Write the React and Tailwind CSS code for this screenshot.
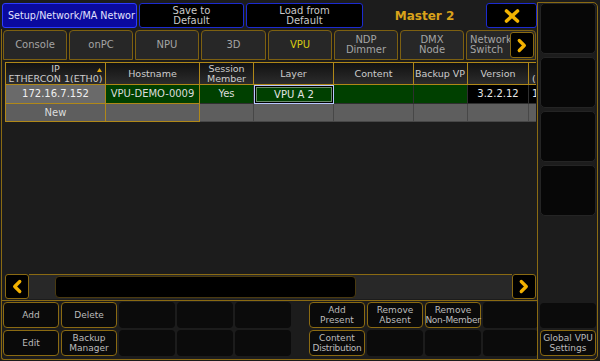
const GOLD = "border-[#8a6a12]";

function ChevronLeft() {
  return (
    <svg width="24" height="25" viewBox="0 0 24 25">
      <polyline points="15,7 9.5,12.5 15,18" fill="none" stroke="#f2b100" strokeWidth="3.6" strokeLinecap="round" strokeLinejoin="round" />
    </svg>
  );
}
function ChevronRight() {
  return (
    <svg width="24" height="25" viewBox="0 0 24 25">
      <polyline points="9,7 14.5,12.5 9,18" fill="none" stroke="#f2b100" strokeWidth="3.6" strokeLinecap="round" strokeLinejoin="round" />
    </svg>
  );
}

function Tab({ w, children, active }) {
  return (
    <div
      className={`h-[30px] ${w} shrink-0 rounded-t-[4px] border border-[#7d6011] bg-[#272727] flex flex-col items-center justify-center leading-[10px] ${
        active ? "text-[#d8cc10] bg-[#222222]" : "text-[#a4a4a4]"
      }`}
    >
      {children}
    </div>
  );
}

function HBtn({ children, w = "w-[56px]", empty }) {
  if (empty)
    return <div className={`${w} shrink-0 h-full rounded-[4px] bg-[#0b0b0b]`} />;
  return (
    <div className={`${w} shrink-0 h-full rounded-[4px] bg-[#0a0a0a] border ${GOLD} flex flex-col items-center justify-center text-[#bcbcbc] text-[9px] leading-[10px] whitespace-nowrap`}>
      {children}
    </div>
  );
}

export default function App() {
  const hdr =
    "h-[23px] bg-linear-to-b from-[#121212] to-[#2c2c2c] border-r border-b border-t border-[#b08818] flex flex-col items-center justify-center text-[#cdcdcd] text-[9.5px] leading-[10px] whitespace-nowrap overflow-hidden";
  return (
    <div className="w-[600px] h-[361px] bg-[#1c1c1c] flex overflow-hidden font-['DejaVu_Sans',sans-serif] text-[10px] leading-[10px]">
      {/* LEFT */}
      <div className="w-[537px] shrink-0 flex flex-col">
        {/* title bar */}
        <div className="h-[29px] shrink-0 flex pt-[3px] pb-[1px] pl-[2px] gap-[2px]">
          <div className="w-[135px] shrink-0 bg-[#0a0a9e] border border-[#2c3cff] rounded-[3px] flex items-center pl-[5px] text-[#e2e2ff] text-[9.6px] whitespace-nowrap overflow-hidden">
            Setup/Network/MA Networ
          </div>
          <div className="w-[105px] shrink-0 bg-black border border-[#1c2bd0] rounded-[3px] flex flex-col items-center justify-center text-[#c8c8c8]">
            <span>Save to</span>
            <span>Default</span>
          </div>
          <div className="w-[117px] shrink-0 bg-black border border-[#1c2bd0] rounded-[3px] flex flex-col items-center justify-center text-[#c8c8c8]">
            <span>Load from</span>
            <span>Default</span>
          </div>
          <div className="w-[119px] shrink-0 flex items-center justify-center text-[#d9a21a] font-bold text-[12px]">
            Master 2
          </div>
          <div className="w-[51px] shrink-0 bg-black border border-[#1c2bd0] rounded-[3px] flex items-center justify-center">
            <svg width="16" height="14" viewBox="0 0 16 14">
              <path d="M2.5 2 L13.5 12 M13.5 2 L2.5 12" stroke="#f2b300" strokeWidth="3.6" strokeLinecap="round" />
            </svg>
          </div>
        </div>

        {/* main panel */}
        <div className={`h-[272px] shrink-0 ml-[1px] border-l border-b ${GOLD} flex flex-col pt-[1px]`}>
          {/* tabs */}
          <div className="h-[30px] shrink-0 flex gap-[2px] pl-[1px]">
            <Tab w="w-[64px]">Console</Tab>
            <Tab w="w-[64px]">onPC</Tab>
            <Tab w="w-[64px]">NPU</Tab>
            <Tab w="w-[65px]">3D</Tab>
            <Tab w="w-[64px]" active>VPU</Tab>
            <Tab w="w-[64px]">
              <span>NDP</span>
              <span>Dimmer</span>
            </Tab>
            <Tab w="w-[64px]">
              <span>DMX</span>
              <span>Node</span>
            </Tab>
            <div className="relative h-[30px] w-[70px] shrink-0 rounded-t-[4px] border border-[#7d6011] bg-[#272727] flex flex-col justify-center pl-[3px] text-[#a4a4a4] leading-[10px] overflow-hidden">
              <span>Network</span>
              <span>Switch</span>
              <div className="absolute right-[1px] top-[1px] w-[24px] h-[26px] bg-black border border-[#8a6a12] rounded-[3px] flex items-center justify-center">
                <ChevronRight />
              </div>
            </div>
          </div>

          {/* table */}
          <div className="mt-[2px] ml-[3px] w-[531px] overflow-hidden">
            <div className="grid grid-cols-[101px_94px_54px_80px_80px_54px_61px_40px] w-[564px]">
              {/* header */}
              <div className={`${hdr} border-l relative`}>
                <span>IP</span>
                <span>ETHERCON 1(ETH0)</span>
                <svg className="absolute right-[3px] top-[5px]" width="5" height="4" viewBox="0 0 5 4">
                  <polygon points="2.5,0 5,4 0,4" fill="#e0a810" />
                </svg>
              </div>
              <div className={hdr}>Hostname</div>
              <div className={hdr}>
                <span>Session</span>
                <span>Member</span>
              </div>
              <div className={hdr}>Layer</div>
              <div className={hdr}>Content</div>
              <div className={`${hdr} items-start pl-[1px]`}>Backup VP</div>
              <div className={hdr}>Version</div>
              <div className={`${hdr} items-start pl-[3px]`}>
                <span>&nbsp;</span>
                <span>(ms)</span>
              </div>

              {/* row 1 */}
              <div className="h-[19px] bg-[#6a6a6a] border-l border-r border-b border-[#b08818] flex items-center justify-center text-[#f0f0f0]">
                172.16.7.152
              </div>
              <div className="h-[19px] bg-[#004000] border-r border-b border-[#b08818] flex items-center justify-center text-[#dcdcdc]">
                VPU-DEMO-0009
              </div>
              <div className="h-[19px] bg-[#004000] border-r border-b border-[#2f2f2f] flex items-center justify-center text-[#dcdcdc]">
                Yes
              </div>
              <div className="h-[19px] border border-[#b8c8ff] bg-black p-[1px]">
                <div className="h-full bg-[#004000] border border-[#6a8c6a] flex items-center justify-center text-[#e4e4e4]">
                  VPU A 2
                </div>
              </div>
              <div className="h-[19px] bg-[#004000] border-r border-b border-[#2f2f2f]" />
              <div className="h-[19px] bg-[#004000] border-r border-b border-[#2f2f2f]" />
              <div className="h-[19px] bg-black border-r border-b border-[#2f2f2f] flex items-center justify-center text-[#e8e8e8]">
                3.2.2.12
              </div>
              <div className="h-[19px] bg-black border-b border-[#2f2f2f] flex items-center pl-[3px] text-[#e8e8e8]">
                1
              </div>

              {/* row 2 */}
              <div className="h-[18px] bg-[#5e5e5e] border-l border-r border-b border-[#b08818] flex items-center justify-center text-[#dcdcdc]">
                New
              </div>
              <div className="h-[18px] bg-[#5e5e5e] border-r border-b border-[#b08818]" />
              <div className="h-[18px] bg-[#5e5e5e] border-r border-b border-[#474747]" />
              <div className="h-[18px] bg-[#5e5e5e] border-r border-b border-[#474747]" />
              <div className="h-[18px] bg-[#5e5e5e] border-r border-b border-[#474747]" />
              <div className="h-[18px] bg-[#5e5e5e] border-r border-b border-[#474747]" />
              <div className="h-[18px] bg-[#5e5e5e] border-r border-b border-[#474747]" />
              <div className="h-[18px] bg-[#5e5e5e] border-b border-[#474747]" />
            </div>
          </div>

          <div className="flex-1" />

          {/* scroll row */}
          <div className="h-[25px] shrink-0 ml-[3px] mb-[1px] w-[532px] flex">
            <div className="w-[24px] shrink-0 bg-black border border-[#8a6a12] rounded-[3px] flex items-center justify-center">
              <ChevronLeft />
            </div>
            <div className="flex-1 bg-[#282828] border-t border-[#8a6a12] flex pl-[26px] py-[1px]">
              <div className="w-[301px] h-full bg-black border border-[#4a3a10] rounded-[4px]" />
            </div>
            <div className="w-[24px] shrink-0 bg-black border border-[#8a6a12] rounded-[3px] flex items-center justify-center">
              <ChevronRight />
            </div>
            <div className="w-[1px] shrink-0" />
          </div>
        </div>

        {/* bottom buttons */}
        <div className={`flex-1 ml-[1px] mb-[1px] border-l border-b ${GOLD} rounded-bl-[3px] pt-[1px] pl-[1px] flex flex-col gap-[2px]`}>
          <div className="h-[26px] flex gap-[2px]">
            <HBtn>Add</HBtn>
            <HBtn>Delete</HBtn>
            <HBtn empty />
            <HBtn empty />
            <HBtn empty />
            <div className="w-[14px] shrink-0" />
            <HBtn>
              <span>Add</span>
              <span>Present</span>
            </HBtn>
            <HBtn>
              <span>Remove</span>
              <span>Absent</span>
            </HBtn>
            <HBtn>
              <span>Remove</span>
              <span className="tracking-[-0.3px]">Non-Member</span>
            </HBtn>
            <HBtn empty w="w-[55px]" />
          </div>
          <div className="h-[26px] flex gap-[2px]">
            <HBtn>Edit</HBtn>
            <HBtn>
              <span>Backup</span>
              <span>Manager</span>
            </HBtn>
            <HBtn empty />
            <HBtn empty />
            <HBtn empty />
            <div className="w-[14px] shrink-0" />
            <HBtn>
              <span>Content</span>
              <span className="tracking-[-0.3px]">Distribution</span>
            </HBtn>
            <HBtn empty />
            <HBtn empty />
            <HBtn empty w="w-[55px]" />
          </div>
        </div>
      </div>

      {/* RIGHT column */}
      <div className={`w-[61px] shrink-0 mt-[2px] mb-[1px] border ${GOLD} rounded-r-[5px] flex flex-col pl-[2px] pr-[1px] pb-[3px]`}>
        <div className="flex flex-col gap-[3px]">
          <div className="h-[51px] rounded-[5px] bg-[#070707] border border-[#242424]" />
          <div className="h-[51px] rounded-[5px] bg-[#070707] border border-[#242424]" />
          <div className="h-[51px] rounded-[5px] bg-[#070707] border border-[#242424]" />
          <div className="h-[51px] rounded-[5px] bg-[#070707] border border-[#242424]" />
        </div>
        <div className="flex-1" />
        <div className="flex flex-col gap-[2px]">
          <div className="h-[25px] rounded-[4px] bg-[#0b0b0b]" />
          <div className={`h-[26px] rounded-[4px] bg-[#0a0a0a] border ${GOLD} flex flex-col items-center justify-center text-[#bcbcbc] text-[9px] leading-[10px] whitespace-nowrap`}>
            <span>Global VPU</span>
            <span>Settings</span>
          </div>
        </div>
      </div>
    </div>
  );
}
